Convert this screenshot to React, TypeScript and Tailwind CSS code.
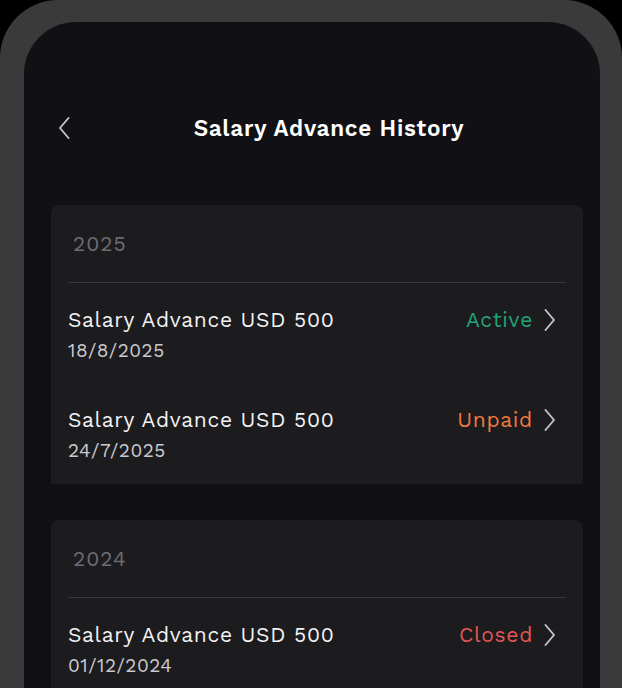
import React from "react";

const font = { fontFamily: '"Work Sans", Inter, "Noto Sans", sans-serif' };

function ChevronLeft() {
  return (
    <svg width="12" height="22" viewBox="0 0 12 22" fill="none">
      <path d="M10.5 1 L2 11 L10.5 21" stroke="#c4c4c6" strokeWidth="1.9" strokeLinecap="round" strokeLinejoin="round" />
    </svg>
  );
}

function ChevronRight() {
  return (
    <svg width="12" height="22" viewBox="0 0 12 22" fill="none">
      <path d="M1.5 1 L10 11 L1.5 21" stroke="#c4c4c6" strokeWidth="1.9" strokeLinecap="round" strokeLinejoin="round" />
    </svg>
  );
}

type Item = { date: string; status: string; color: string };

function Row({ item }: { item: Item }) {
  return (
    <div className="h-[100px] pt-[24px] flex items-start justify-between">
      <div className="flex flex-col">
        <div className="text-[21px] leading-[26px] text-[#f2f2f4] tracking-[0.7px]">Salary Advance USD 500</div>
        <div className="mt-[6px] text-[19px] leading-[24px] text-[#c9c9cd] tracking-[0.5px]">{item.date}</div>
      </div>
      <div className="flex items-center gap-[11px] h-[26px] mr-[10px]">
        <span className={`text-[21px] leading-[26px] tracking-[0.7px] ${item.color}`}>{item.status}</span>
        <ChevronRight />
      </div>
    </div>
  );
}

function Card({ year, items }: { year: string; items: Item[] }) {
  return (
    <div className="bg-[#1c1c1f] rounded-t-[8px] px-[17px] pb-px">
      <div className="pt-[26px] pb-[25px] pl-[5px] text-[21px] leading-[26px] text-[#6c6c72] tracking-[1px]">{year}</div>
      <div className="h-px bg-[#38383c]" />
      {items.map((it, i) => (
        <Row key={i} item={it} />
      ))}
    </div>
  );
}

export default function App() {
  return (
    <div className="w-[622px] h-[688px] bg-black overflow-hidden" style={font}>
      <div className="h-[700px] bg-[#3a3a3a] rounded-t-[58px] pt-[22px] pl-[24px] pr-[22px]">
        <div className="h-full bg-[#111115] rounded-t-[52px] pl-[27px] pr-[17px]">
          <div className="h-[183px] pt-[95px]">
            <div className="flex items-center h-[24px]">
              <div className="w-[24px] pl-[7px] flex items-center -mt-[2px]">
                <ChevronLeft />
              </div>
              <div className="flex-1 text-center text-[22.5px] font-semibold text-white tracking-[0.7px]">
                Salary Advance History
              </div>
            </div>
          </div>
          <Card
            year="2025"
            items={[
              { date: "18/8/2025", status: "Active", color: "text-[#1fa57a]" },
              { date: "24/7/2025", status: "Unpaid", color: "text-[#f27a3e]" },
            ]}
          />
          <div className="h-[36px]" />
          <Card
            year="2024"
            items={[{ date: "01/12/2024", status: "Closed", color: "text-[#e45656]" }]}
          />
        </div>
      </div>
    </div>
  );
}
